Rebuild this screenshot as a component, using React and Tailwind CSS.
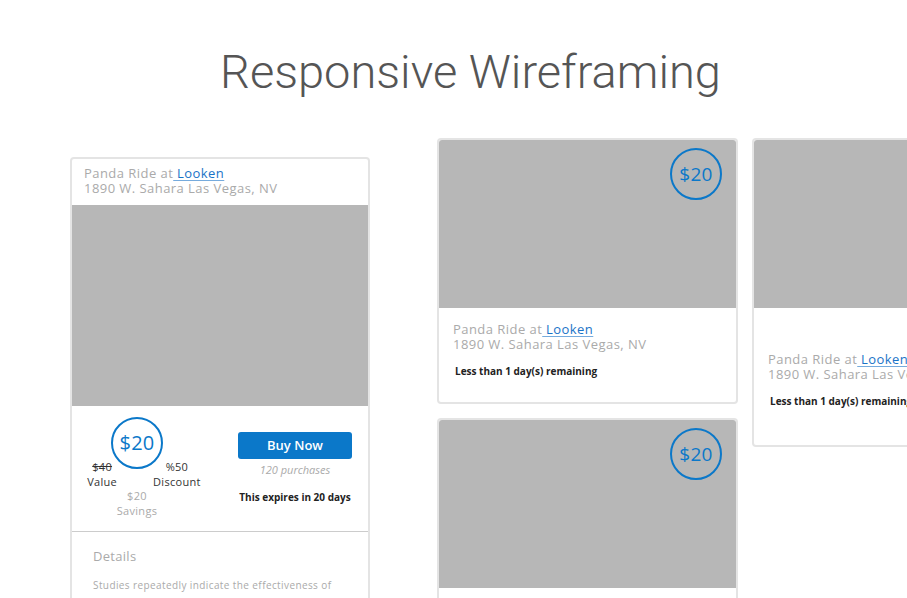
import React from "react";

const body = { fontFamily: '"Open Sans", "DejaVu Sans", sans-serif' };

function Circle({ className = "" }) {
  return (
    <div className={`w-[52px] h-[52px] rounded-full border-2 border-[#0b78c9] flex items-center justify-center text-[#0b78c9] text-[19px] leading-none tracking-[0.3px] ${className}`}>
      $20
    </div>
  );
}

function Venue({ pl = "pl-[14px]" }) {
  return (
    <div className={`${pl} text-[13px] leading-[15px] tracking-[0.45px] text-[#aaaaaa] whitespace-nowrap`}>
      <div>
        Panda Ride at<a className="text-[#1a73c7] underline decoration-[#1a73c7]/60 underline-offset-2"> Looken</a>
      </div>
      <div>1890 W. Sahara Las Vegas, NV</div>
    </div>
  );
}

function SmallCard({ textPt = "pt-[14px]", bottom = "pb-[24px]" }) {
  return (
    <div className="w-[301px] shrink-0 border-2 border-[#e4e4e4] rounded-[4px] bg-white">
      <div className="h-[168px] bg-[#b7b7b7] rounded-t-[3px] flex justify-end items-start pt-[8px] pr-[14px]">
        <Circle />
      </div>
      <div className={`${textPt} ${bottom}`}>
        <Venue />
        <div className="pl-[16px] mt-[12px] text-[10px] leading-[14px] font-bold text-[#222] whitespace-nowrap">
          Less than 1 day(s) remaining
        </div>
      </div>
    </div>
  );
}

export default function App() {
  return (
    <div className="w-[907px] h-[598px] overflow-hidden bg-white" style={body}>
      <h1
        className="text-center text-[47px] leading-none font-light text-[#555555] pt-[48px] pl-[34px]"
        style={{ fontFamily: 'Roboto, "Liberation Sans", sans-serif' }}
      >
        Responsive Wireframing
      </h1>
      <div className="flex items-start mt-[43px] pl-[70px]">
        {/* Left large card */}
        <div className="w-[300px] shrink-0 mt-[19px] border-2 border-[#e4e4e4] rounded-[4px] bg-white">
          <div className="pt-[7px] pb-[9px]">
            <Venue pl="pl-[12px]" />
          </div>
          <div className="h-[201px] bg-[#b7b7b7]" />
          <div className="h-[125px] flex">
            <div className="w-[130px] flex flex-col items-center pt-[11px]">
              <Circle className="text-[20px]" />
              <div className="flex justify-center gap-[36px] pl-[14px] mt-[-10px] text-[11px] leading-[15px] tracking-[0.3px] text-[#333]">
                <div className="text-center">
                  <div className="line-through">$40</div>
                  <div>Value</div>
                </div>
                <div className="text-center">
                  <div>%50</div>
                  <div>Discount</div>
                </div>
              </div>
              <div className="text-center text-[11px] leading-[15px] tracking-[0.3px] text-[#aaaaaa] mt-[-1px]">
                <div>$20</div>
                <div>Savings</div>
              </div>
            </div>
            <div className="ml-auto mr-[16px] w-[114px] pt-[26px] flex flex-col items-center">
              <button className="w-[114px] h-[27px] rounded-[3px] bg-[#0b78c9] text-white text-[13px] font-semibold">
                Buy Now
              </button>
              <div className="mt-[4px] text-[11px] leading-[14px] italic text-[#aaaaaa]">120 purchases</div>
              <div className="mt-[13px] text-[10px] leading-[14px] font-bold text-[#222] whitespace-nowrap">
                This expires in 20 days
              </div>
            </div>
          </div>
          <div className="border-t border-[#cccccc] pl-[21px] pt-[15px] pb-[20px]">
            <div className="text-[13px] leading-[18px] tracking-[0.3px] text-[#aaaaaa]">Details</div>
            <div className="mt-[13px] text-[10px] leading-[14px] tracking-[0.4px] text-[#aaaaaa] whitespace-nowrap">
              Studies repeatedly indicate the effectiveness of
            </div>
          </div>
        </div>
        {/* Middle column */}
        <div className="ml-[67px] flex flex-col gap-[14px] shrink-0">
          <SmallCard />
          <SmallCard />
        </div>
        {/* Right column */}
        <div className="ml-[14px] shrink-0">
          <SmallCard textPt="pt-[44px]" bottom="pb-[37px]" />
        </div>
      </div>
    </div>
  );
}
